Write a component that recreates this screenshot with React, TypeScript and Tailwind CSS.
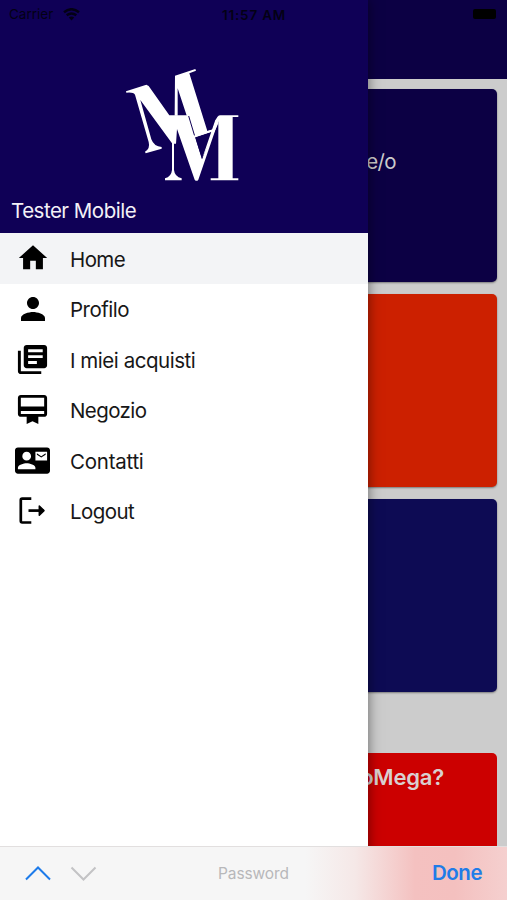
import React from 'react';
import { MdHome, MdPerson, MdLibraryBooks, MdCardMembership, MdContactMail } from 'react-icons/md';

function LogoutIcon() {
  return (
    <svg width="30" height="30" viewBox="0 0 30 30" fill="none" stroke="#000" strokeWidth="2.7" strokeLinejoin="round">
      <path d="M13.3 2.6H4.2Q2.8 2.6 2.8 4V25.1Q2.8 26.5 4.2 26.5H13.3" />
      <path d="M10.5 14.6H25.5" />
      <path d="M21.3 10L26 14.6L21.3 19.2Z" fill="#000" strokeWidth="1.5" />
    </svg>
  );
}

function Logo() {
  return (
    <svg width="140" height="130" viewBox="0 0 420 390" fill="#fff">
      <path d="M48 94L109 74L116 78L178 166H235L276 297L318 180Q322 166 331 166H385V171H368V355H385V361H302V355H325V184L265 359Q260 366 254 359L201 207L198 251H192V330Q194 350 215 355V361H165V355Q184 350 186 330V250L91 120L124 238Q132 260 155 261V266L107 280L105 275Q121 266 116 246L75 104Q71 96 49 98Z" />
      <path d="M195 47L256 27L258 32L238 40L292 213L315 207V212L256 232L254 226L250 227L203 85V167H194Z" />
      <path d="M236 168L254 228" fill="none" stroke="#0f0056" strokeWidth="3" />
      <path d="M256 233L308 216L276 298Z" fill="#0f0056" />
      <path d="M270 309L276 297L316 180L325 170L325 190Z" />
      <path d="M253 229L314 209" stroke="#fff" strokeWidth="5" />
    </svg>
  );
}

const items = [
  { label: 'Home', icon: <MdHome size={34} />, spacing: 'tracking-[-0.6px]' },
  { label: 'Profilo', icon: <MdPerson size={36} />, spacing: 'tracking-[-0.5px]' },
  { label: 'I miei acquisti', icon: <MdLibraryBooks size={35} />, spacing: 'tracking-[-0.46px]' },
  { label: 'Negozio', icon: <MdCardMembership size={35} />, spacing: 'tracking-[-0.6px]' },
  { label: 'Contatti', icon: <MdContactMail size={35} />, spacing: 'tracking-[-0.25px]' },
  { label: 'Logout', icon: <LogoutIcon />, spacing: 'tracking-[-0.55px]' },
];

export default function App() {
  return (
    <div className="relative h-[900px] w-[507px] overflow-hidden bg-[#cccccc] font-['Inter','Liberation_Sans',sans-serif]">
      <main className="flex h-full flex-col">
        <div className="h-[79px] shrink-0 bg-[#0c0044]" />
        <div className="flex flex-col px-[10px] pt-[10px]">
          <section className="h-[193px] rounded-[5px] bg-[#0c0044] pt-[60px] pr-[101px] text-right text-[20.5px] leading-[26px] tracking-[-0.6px] text-[#cccccc] shadow-[0_1px_2px_rgba(0,0,0,0.4)]">e/o</section>
          <section className="mt-[12px] h-[193px] rounded-[5px] bg-[#cc2000] shadow-[0_1px_2px_rgba(0,0,0,0.4)]" />
          <section className="mt-[12px] h-[193px] rounded-[5px] bg-[#0d0b54] shadow-[0_1px_2px_rgba(0,0,0,0.4)]" />
          <section className="mt-[61px] h-[193px] rounded-[5px] bg-[#cc0000] pt-[10px] pr-[53px] text-right text-[22px] leading-[28px] font-semibold tracking-[-0.2px] text-[#d9d0d0]">MondoMega?</section>
        </div>
      </main>

      <aside className="absolute inset-y-0 left-0 flex w-[368px] flex-col bg-white shadow-[0_0_12px_rgba(0,0,0,0.5)]">
        <header className="flex h-[233px] shrink-0 flex-col bg-[#0f0056] pt-[60px]">
          <div className="ml-[110px]"><Logo /></div>
          <h1 className="mt-[6px] ml-[11px] text-[20.5px] leading-[30px] tracking-[-0.5px] text-[#f3f1f7]">Tester Mobile</h1>
        </header>
        <nav>
          {items.map((item, index) => (
            <a key={item.label} className={`flex h-[50.5px] items-center ${index === 0 ? 'bg-[#f3f4f6]' : ''}`}>
              <span className="flex w-[65px] items-center justify-center text-black">{item.icon}</span>
              <span className={`ml-[5px] pt-[3px] text-[20.5px] leading-[28px] text-[#171717] ${item.spacing}`}>{item.label}</span>
            </a>
          ))}
        </nav>
      </aside>

      <div className="absolute inset-x-0 top-0 flex h-7 items-center text-[13.5px] text-[#030014]">
        <span className="ml-[9px] w-[47px]">Carrier</span>
        <svg className="ml-[7px]" width="17" height="13" viewBox="0 0 17 13" fill="none" stroke="#030014" strokeWidth="2.5">
          <path d="M1 4.2Q8.5 -1.7 16 4.2M3.7 7.3Q8.5 3.7 13.3 7.3" />
          <path d="M5.8 9.5Q8.5 7.7 11.2 9.5L8.5 12.5Z" fill="#030014" stroke="none" />
        </svg>
        <span className="ml-[142px] pt-[2px] text-[13.5px] font-semibold tracking-[0.8px]">11:57 AM</span>
        <span className="mr-[11px] ml-auto h-[10px] w-[23px] rounded-[2px] bg-black" />
      </div>

      <footer className="absolute inset-x-0 bottom-0 flex h-[54px] items-center border-t border-[#e2dfdf] bg-[linear-gradient(to_right,#f6f6f6_0px,#f6f6f6_305px,#f5e8e7_355px,#f4c1c0_415px,#f4c0bf_455px,#f5d0cf_507px)]">
        <svg className="ml-[24px]" width="74" height="20" viewBox="0 0 74 20" fill="none" strokeWidth="2">
          <path d="M2 15.5L14 3.5L26 15.5" stroke="#1d7bea" />
          <path d="M47.5 3.5L59.5 15.5L71.5 3.5" stroke="#c3c3c5" />
        </svg>
        <span className="ml-[120px] text-[15.5px] tracking-[-0.1px] text-[#b8b8ba]">Password</span>
        <span className="mr-[25px] ml-auto text-[20.5px] font-semibold tracking-[-0.5px] text-[#207ce8]">Done</span>
      </footer>
    </div>
  );
}
